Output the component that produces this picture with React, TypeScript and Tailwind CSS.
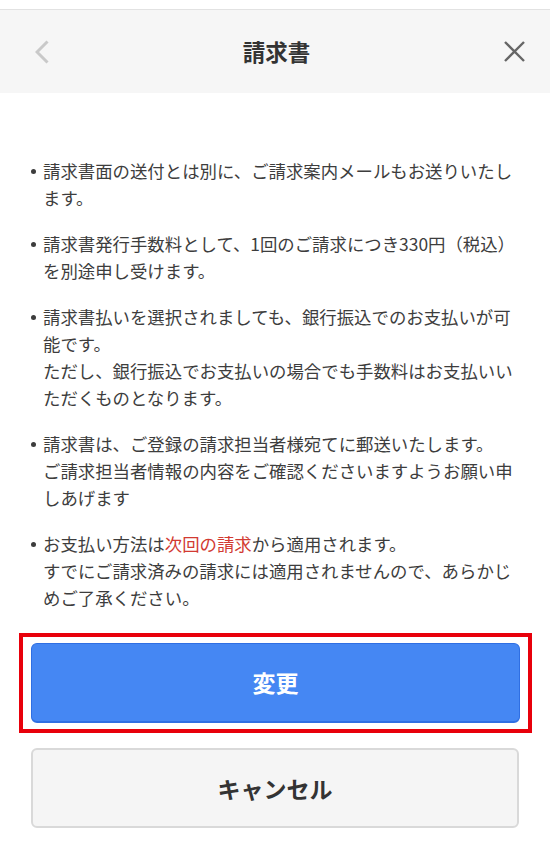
import React from "react";

// each note is a list of rendered lines, as in the reference
const notes: React.ReactNode[][] = [
  ["請求書面の送付とは別に、ご請求案内メールもお送りいたし", "ます。"],
  ["請求書発行手数料として、1回のご請求につき330円（税込）", "を別途申し受けます。"],
  [
    "請求書払いを選択されましても、銀行振込でのお支払いが可",
    "能です。",
    "ただし、銀行振込でお支払いの場合でも手数料はお支払いい",
    "ただくものとなります。",
  ],
  [
    "請求書は、ご登録の請求担当者様宛てに郵送いたします。",
    "ご請求担当者情報の内容をご確認くださいますようお願い申",
    "しあげます",
  ],
  [
    <>
      お支払い方法は<span className="text-[#d23a32]">次回の請求</span>から適用されます。
    </>,
    "すでにご請求済みの請求には適用されませんので、あらかじ",
    "めご了承ください。",
  ],
];

export default function App() {
  return (
    <div className="min-h-[842px] bg-white font-['Noto_Sans_CJK_JP','Noto_Sans',sans-serif] text-[#3d3d3d]">
      <div className="h-[9px]" />

      {/* Header */}
      <header className="flex h-[84px] items-center border-t border-[#e2e2e2] bg-[#f6f6f6] pl-[35px] pr-[25px]">
        <svg width="14" height="24" viewBox="0 0 14 24" className="shrink-0">
          <polyline points="12.5,1.5 2,12 12.5,22.5" fill="none" stroke="#c9c9c9" strokeWidth="3" />
        </svg>
        <h1 className="flex-1 text-center text-[22.5px] font-bold text-[#333]">請求書</h1>
        <svg width="21" height="21" viewBox="0 0 21 21" className="shrink-0">
          <path d="M1 1L20 20M20 1L1 20" stroke="#666" strokeWidth="2.4" />
        </svg>
      </header>

      {/* Notes */}
      <ul className="pl-[31px] pr-[20px] pt-[64px]">
        {notes.map((lines, i) => (
          <li key={i} className="mb-[19px] flex text-[17.4px] leading-[27px]">
            <span className="mr-[7px] mt-[12px] h-[5px] w-[5px] shrink-0 rounded-full bg-[#3d3d3d]" />
            <p className="whitespace-nowrap">
              {lines.map((l, j) => (
                <React.Fragment key={j}>
                  {j > 0 && <br />}
                  {l}
                </React.Fragment>
              ))}
            </p>
          </li>
        ))}
      </ul>

      {/* Actions */}
      <div className="ml-[19px] mr-[18px] mt-[22px] border-4 border-[#e8000b] px-[8px] py-[6px]">
        <button className="flex h-[80px] w-full items-center justify-center rounded-[6px] border border-b-2 border-[#2f6fe3] bg-[#4587f3] text-[23px] font-bold text-white">
          変更
        </button>
      </div>
      <div className="mx-[31px] mt-[15px]">
        <button className="flex h-[80px] w-full items-center justify-center rounded-[6px] border-2 border-[#d9d9d9] bg-[#f5f5f5] text-[23px] font-bold text-[#333]">
          キャンセル
        </button>
      </div>
    </div>
  );
}
